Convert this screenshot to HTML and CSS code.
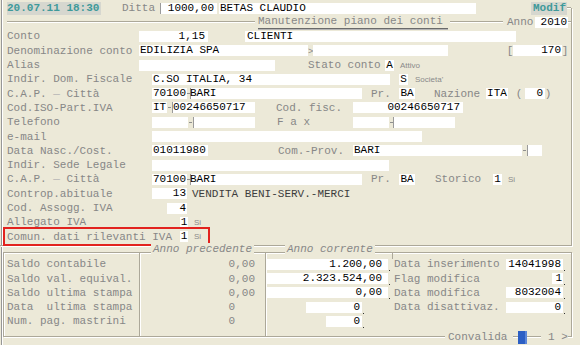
FILE: index.html
```html
<!DOCTYPE html>
<html lang="it">
<head>
<meta charset="utf-8">
<title>Manutenzione piano dei conti</title>
<link rel="stylesheet" href="styles.css">
</head>
<body>
<div class="screen">
  <div class="row top">
    <span class="clock w-94">20.07.11 18:30</span>
    <span class="ml-21 w-33">Ditta</span>
    <span class="f r pr-3 ml-5 w-57 edge">1000,00</span>
    <span class="f pl-1 ml-2 w-257">BETAS CLAUDIO</span>
    <span class="mode ml-55 w-36">Modif</span>
    <span class="hr w-4"></span>
  </div>
  <div class="frame">
    <div class="row">
      <span class="hr w-248"></span>
      <span class="title ml-3 w-190">Manutenzione piano dei conti</span>
      <span class="hr ml-2 w-53"></span>
      <span class="ml-4 w-27">Anno</span>
      <span class="f r pr-1 ml-1 w-33">2010</span>
      <span class="hr w-3"></span>
    </div>
    <div class="row">
      <span class="w-132">Conto</span>
      <span class="f r pr-3 w-69">1,15</span>
      <span class="f pl-2 ml-37 w-271">CLIENTI</span>
    </div>
    <div class="row">
      <span class="w-132">Denominazione conto</span>
      <span class="f pl-1 w-169">EDILIZIA SPA</span>
      <span class="gt w-5">&gt;</span>
      <span class="f w-135"></span>
      <span class="ch ml-59 w-6">[</span>
      <span class="f r pr-1 w-49">170</span>
      <span class="ch w-6">]</span>
    </div>
    <div class="row">
      <span class="w-132">Alias</span>
      <span class="f w-136"></span>
      <span class="ml-33 w-73">Stato conto</span>
      <span class="f c ml-4 w-9">A</span>
      <span class="s ml-6">Attivo</span>
    </div>
    <div class="row">
      <span class="w-145">Indir. Dom. Fiscale</span>
      <span class="f pl-1 w-238">C.SO ITALIA, 34</span>
      <span class="f c ml-9 w-9">S</span>
      <span class="s ml-7">Societa'</span>
    </div>
    <div class="row">
      <span class="w-145">C.A.P. <span class="dim">—</span> Città</span>
      <span class="f pl-1 w-35">70100</span>
      <span class="dash w-3"></span>
      <span class="f w-172 edge">BARI</span>
      <span class="ml-9 w-20">Pr.</span>
      <span class="f c ml-8 w-16">BA</span>
      <span class="ml-19 w-47">Nazione</span>
      <span class="f c ml-5 w-22">ITA</span>
      <span class="ch ml-8 w-6">(</span>
      <span class="f r pr-2 ml-3 w-20">0</span>
      <span class="ch w-6">)</span>
    </div>
    <div class="row">
      <span class="w-145">Cod.ISO-Part.IVA</span>
      <span class="f pl-1 w-15">IT</span>
      <span class="dash w-5"></span>
      <span class="f pl-1 w-83 edge">00246650717</span>
      <span class="ml-21 w-66">Cod. fisc.</span>
      <span class="f r pr-3 ml-11 w-110">00246650717</span>
    </div>
    <div class="row">
      <span class="w-145">Telefono</span>
      <span class="f w-36"></span>
      <span class="dash w-5"></span>
      <span class="f w-62 edge"></span>
      <span class="ml-22 w-33">F a x</span>
      <span class="f ml-43 w-36"></span>
      <span class="dash w-4"></span>
      <span class="f w-62 edge"></span>
    </div>
    <div class="row">
      <span class="w-145">e-mail</span>
      <span class="f w-270"></span>
    </div>
    <div class="row">
      <span class="w-145">Data Nasc./Cost.</span>
      <span class="f pl-1 w-56">01011980</span>
      <span class="ml-70 w-66">Com.-Prov.</span>
      <span class="f pl-1 ml-9 w-169">BARI</span>
      <span class="dash w-5"></span>
      <span class="f w-15 edge"></span>
    </div>
    <div class="row">
      <span class="w-145">Indir. Sede Legale</span>
      <span class="f w-237"></span>
    </div>
    <div class="row">
      <span class="w-145">C.A.P. <span class="dim">—</span> Città</span>
      <span class="f pl-1 w-35">70100</span>
      <span class="dash w-3"></span>
      <span class="f w-172 edge">BARI</span>
      <span class="ml-9 w-20">Pr.</span>
      <span class="f c ml-8 w-16">BA</span>
      <span class="ml-20 w-47">Storico</span>
      <span class="f c ml-11 w-9">1</span>
      <span class="s ml-6">Si</span>
    </div>
    <div class="row">
      <span class="w-145">Controp.abituale</span>
      <span class="f r pr-1 w-35">13</span>
      <span class="txt ml-5">VENDITA BENI-SERV.-MERCI</span>
    </div>
    <div class="row">
      <span class="w-160">Cod. Assogg. IVA</span>
      <span class="f r pr-1 w-20">4</span>
    </div>
    <div class="row">
      <span class="w-173">Allegato IVA</span>
      <span class="f c w-8">1</span>
      <span class="s ml-6">Si</span>
    </div>
    <div class="row">
      <span class="hl">
        <span class="w-173">Comun. dati rilevanti IVA</span>
        <span class="f c w-8">1</span>
        <span class="s ml-6">Si</span>
      </span>
    </div>
  </div>

  <div class="grp">
    <span class="legend lg1">Anno precedente</span>
    <span class="legend lg2">Anno corrente</span>
    <div class="col c1">
      <div class="brow">Saldo contabile</div>
      <div class="brow">Saldo val. equival.</div>
      <div class="brow">Saldo ultima stampa</div>
      <div class="brow">Data  ultima stampa</div>
      <div class="brow">Num. pag. mastrini</div>
    </div>
    <div class="col c2">
      <div class="brow">0,00</div>
      <div class="brow">0,00</div>
      <div class="brow">0,00</div>
      <div class="brow int">0</div>
      <div class="brow int">0</div>
    </div>
    <div class="col c3">
      <div class="brow"><span class="f r pr-6 ml-1 w-121 dot">1.200,00</span></div>
      <div class="brow"><span class="f r pr-6 ml-1 w-121 dot">2.323.524,00</span></div>
      <div class="brow"><span class="f r pr-6 ml-1 w-121 dot">0,00</span></div>
      <div class="brow"><span class="f r pr-2 ml-40 w-56 dot">0</span></div>
      <div class="brow"><span class="f r pr-2 ml-60 w-36 dot">0</span></div>
    </div>
    <div class="col c4">
      <div class="brow"><span class="w-112">Data inserimento</span><span class="f r pr-2 w-57 dot">14041998</span></div>
      <div class="brow"><span class="w-158">Flag modifica</span><span class="f r pr-1 w-11 dot">1</span></div>
      <div class="brow"><span class="w-112">Data modifica</span><span class="f r pr-2 w-57 dot">8032004</span></div>
      <div class="brow"><span class="w-112">Data disattivaz.</span><span class="f r pr-2 w-57 dot">0</span></div>
    </div>
    <div class="foot">
      <span>Convalida</span>
      <span class="hr ml-6 w-5"></span>
      <span class="cursor"></span>
      <span class="hr w-14"></span>
      <span> 1 &gt;</span>
    </div>
  </div>
</div>
</body>
</html>
```

FILE: styles.css
```css
* { box-sizing: border-box; margin: 0; padding: 0; }
html, body { width: 580px; height: 345px; overflow: hidden; }
body {
  background: #ece9d8;
  font: 11px "Liberation Mono", "Courier New", monospace;
  color: #878787;
}
.screen {
  width: 580px;
  height: 345px;
  padding-top: 1px;
  background: linear-gradient(to right, #ece9d8 0 1px, #979797 1px 2px, #ffffff 2px 3px, #ece9d8 3px);
}
.row {
  display: flex;
  align-items: center;
  height: 14.3px;
  padding-left: 7px;
  white-space: pre;
}
.row.top { height: 14px; }
.row > span, .hl > span { flex: none; }

.frame {
  width: 572px;
  margin-top: -7px;
  padding-top: 7px;
  padding-bottom: 1.5px;
  border-right: 1px solid #aca899;
  border-bottom: 1px solid #aca899;
  box-shadow: 1px 1px 0 #ffffff;
}

.clock, .mode {
  height: 13px;
  line-height: 13px;
  background: #d6d7cf;
  color: #3f9a9a;
  font-weight: bold;
}
.mode { padding-left: 2px; }

.f {
  display: block;
  height: 11px;
  line-height: 11px;
  background: #ffffff;
  color: #000000;
  overflow: visible;
  white-space: pre;
}
.edge { box-shadow: inset 1px 0 #9a9a9a; }
.dot { position: relative; }
.dot::after {
  content: "";
  position: absolute;
  right: -2px;
  bottom: -1px;
  width: 1px;
  height: 1px;
  background: #333333;
}
.r { text-align: right; }
.c { text-align: center; }
.hr {
  height: 2px;
  border-top: 1px solid #aca899;
  border-bottom: 1px solid #ffffff;
}
.title {
  line-height: 11px;
  height: 13px;
  border-bottom: 1px solid #6a6a6a;
  box-shadow: 0 1px 0 #b4b4b4;
  margin-top: 1px;
}
.ch { text-align: center; overflow: visible; display: flex; justify-content: center; }
.dash {
  display: flex;
  align-items: center;
  justify-content: center;
  height: 11px;
}
.dash::before {
  content: "";
  width: 3px;
  height: 1px;
  background: #8f8f8f;
}
.gt { font: 9px "Liberation Sans", Arial, sans-serif; color: #8a8a8a; text-align: center; }
.s { font: 8px "Liberation Sans", Arial, sans-serif; color: #8a8a8a; }
.dim { color: #b5b5b5; }
.txt { color: #3c3c3c; }

.hl {
  display: flex;
  align-items: center;
  height: 14.3px;
  width: 203px;
  margin-left: -2px;
  padding-left: 2px;
  outline: 2px solid #e2231f;
}

/* bottom group */
.grp {
  position: relative;
  display: flex;
  width: 569px;
  height: 85px;
  margin: 6px 0 0 3px;
  border: 1px solid #aca899;
  box-shadow: inset 1px 1px 0 #ffffff, 1px 1px 0 #ffffff;
}
.col { padding-top: 4px; flex: none; }
.c1 {
  width: 136px;
  padding-left: 3px;
  border-right: 1px solid #aca899;
  box-shadow: 1px 0 0 #ffffff;
}
.c2 {
  width: 126px;
  padding-right: 10px;
  border-right: 1px solid #aca899;
  box-shadow: 1px 0 0 #ffffff;
}
.c2 .brow { justify-content: flex-end; }
.c2 .brow.int { padding-right: 20px; }
.c3 { width: 126px; }
.c4 {
  width: 178px;
  padding-left: 2px;
  background: linear-gradient(#aca899, #aca899) 0 0 / 1px 6px no-repeat;
}
.brow {
  display: flex;
  align-items: center;
  height: 14.25px;
  white-space: pre;
}
.brow > span { flex: none; }

.legend {
  position: absolute;
  top: -10px;
  height: 13px;
  line-height: 13px;
  padding: 0 2px;
  background: #ece9d8;
  font-style: italic;
  color: #878787;
}
.lg1 { left: 147px; }
.lg2 { left: 281px; }

.foot {
  position: absolute;
  left: 441px;
  bottom: -8px;
  height: 14px;
  display: flex;
  align-items: center;
  padding-left: 3px;
  background: #ece9d8;
  white-space: pre;
}
.foot > span { flex: none; }
.cursor {
  width: 9px;
  height: 13px;
  background: #2c5fc4;
  box-shadow: inset -2px 0 #5b86d8;
}

/* utilities */
.ml-1 { margin-left: 1px; } .ml-2 { margin-left: 2px; } .ml-3 { margin-left: 3px; }
.ml-4 { margin-left: 4px; } .ml-5 { margin-left: 5px; } .ml-6 { margin-left: 6px; }
.ml-7 { margin-left: 7px; } .ml-8 { margin-left: 8px; } .ml-9 { margin-left: 9px; }
.ml-11 { margin-left: 11px; } .ml-19 { margin-left: 19px; } .ml-20 { margin-left: 20px; }
.ml-21 { margin-left: 21px; } .ml-22 { margin-left: 22px; } .ml-33 { margin-left: 33px; }
.ml-37 { margin-left: 37px; } .ml-40 { margin-left: 40px; } .ml-43 { margin-left: 43px; }
.ml-55 { margin-left: 55px; } .ml-59 { margin-left: 59px; } .ml-60 { margin-left: 60px; }
.ml-70 { margin-left: 70px; }
.pl-1 { padding-left: 1px; } .pl-2 { padding-left: 2px; }
.pr-1 { padding-right: 1px; } .pr-2 { padding-right: 2px; } .pr-3 { padding-right: 3px; }
.pr-6 { padding-right: 6px; }
.w-3 { width: 3px; } .w-4 { width: 4px; } .w-5 { width: 5px; } .w-6 { width: 6px; }
.w-8 { width: 8px; } .w-9 { width: 9px; } .w-11 { width: 11px; } .w-14 { width: 14px; }
.w-15 { width: 15px; } .w-16 { width: 16px; } .w-20 { width: 20px; } .w-22 { width: 22px; }
.w-27 { width: 27px; } .w-33 { width: 33px; } .w-35 { width: 35px; } .w-36 { width: 36px; }
.w-47 { width: 47px; } .w-49 { width: 49px; } .w-53 { width: 53px; } .w-56 { width: 56px; }
.w-57 { width: 57px; } .w-62 { width: 62px; } .w-66 { width: 66px; } .w-69 { width: 69px; }
.w-73 { width: 73px; } .w-83 { width: 83px; } .w-94 { width: 94px; } .w-110 { width: 110px; }
.w-112 { width: 112px; } .w-121 { width: 121px; } .w-132 { width: 132px; } .w-135 { width: 135px; }
.w-136 { width: 136px; } .w-145 { width: 145px; } .w-158 { width: 158px; } .w-160 { width: 160px; }
.w-169 { width: 169px; } .w-172 { width: 172px; } .w-173 { width: 173px; } .w-190 { width: 190px; }
.w-237 { width: 237px; } .w-238 { width: 238px; } .w-248 { width: 248px; } .w-257 { width: 257px; }
.w-270 { width: 270px; } .w-271 { width: 271px; }
```
